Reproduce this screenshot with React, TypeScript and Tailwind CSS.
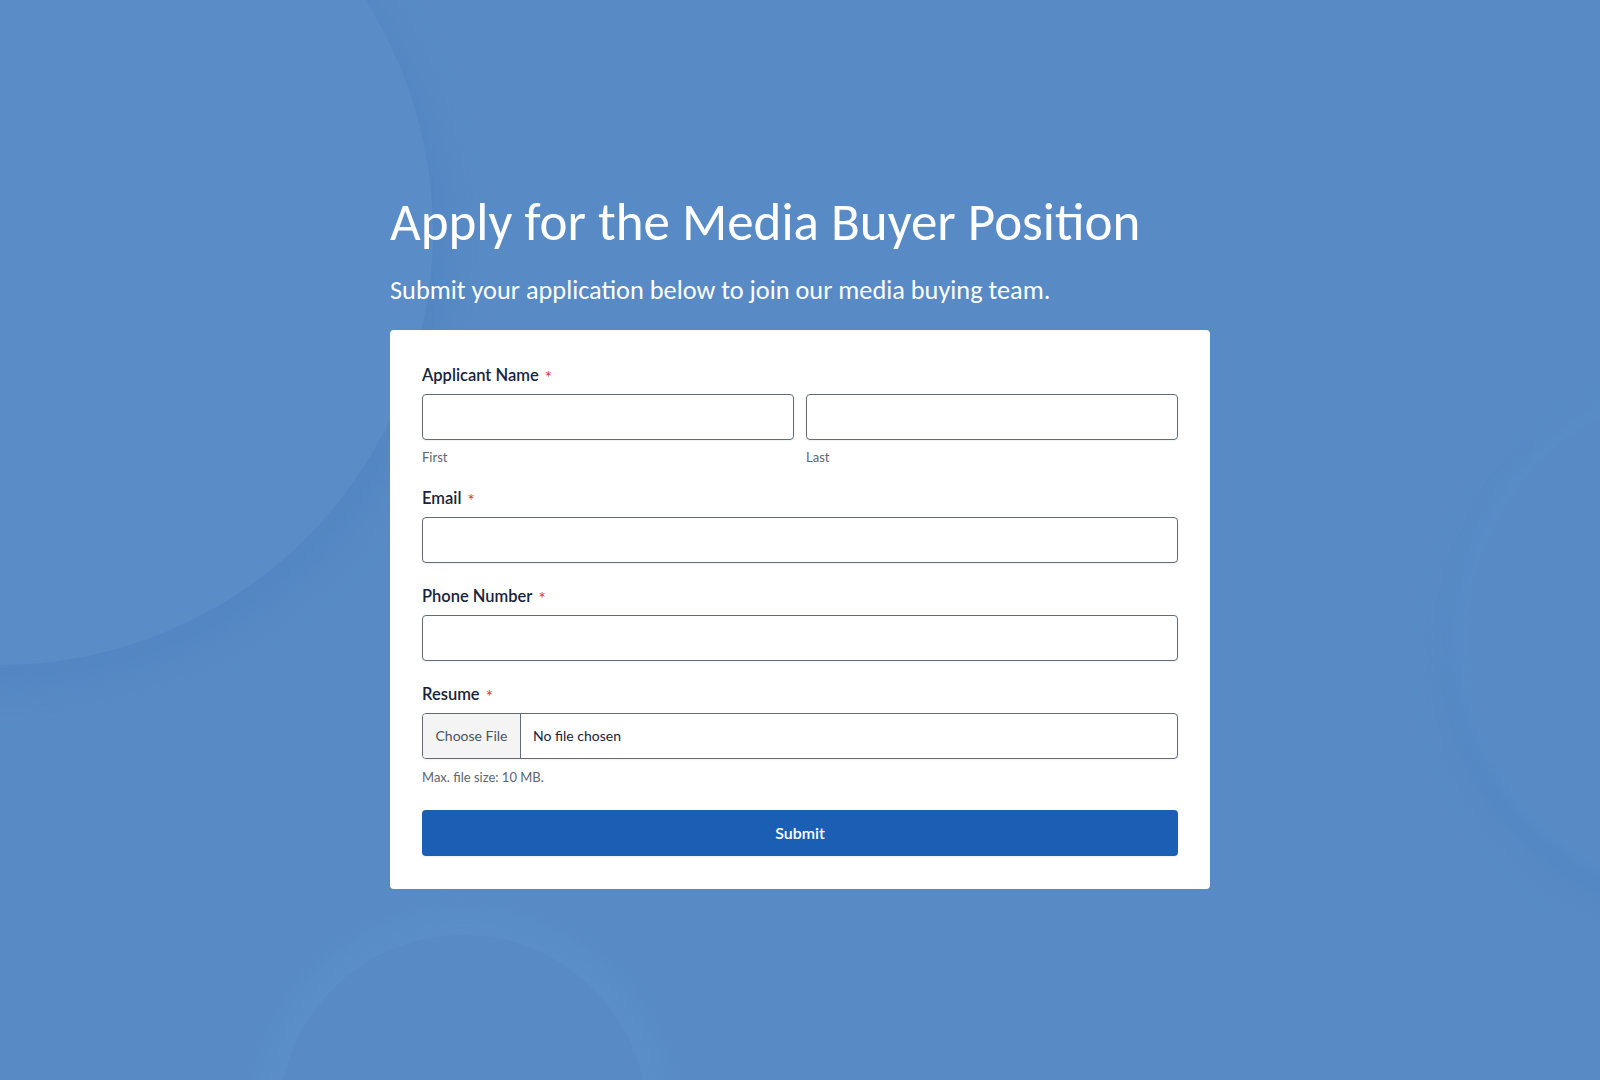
import React from "react"

const labelFont = { fontFamily: "Lato, 'Noto Sans', sans-serif" }
const headFont = { fontFamily: "Carlito, Calibri, Lato, sans-serif" }

function Label({ children }: { children: React.ReactNode }) {
  return (
    <div className="mb-[7px] flex h-[25px] items-center pt-[2px] text-[16.5px] font-semibold text-[#17243a]">
      {children}
      <span className="ml-[6px] translate-y-[3px] text-[17px] font-normal text-[#d33b30]">*</span>
    </div>
  )
}

function TextInput() {
  return (
    <input
      type="text"
      className="block h-[46px] w-full rounded-[4px] border border-[#616b79] bg-white px-3 text-[15px] text-[#17243a] shadow-[0_1px_2px_rgba(0,0,0,0.06)] outline-none"
    />
  )
}

function Backdrop() {
  return (
    <svg className="pointer-events-none absolute inset-0 h-full w-full" viewBox="0 0 1600 1080" preserveAspectRatio="none">
      <defs>
        <filter id="soft" x="-20%" y="-20%" width="140%" height="140%">
          <feGaussianBlur stdDeviation="18" />
        </filter>
        <filter id="softer" x="-20%" y="-20%" width="140%" height="140%">
          <feGaussianBlur stdDeviation="8" />
        </filter>
      </defs>
      {/* top-left disc */}
      <circle cx="14" cy="252" r="436" fill="#4a7dba" opacity="0.35" filter="url(#soft)" />
      <circle cx="0" cy="232" r="433" fill="#5a8cc7" />
      {/* right disc */}
      <circle cx="1712" cy="660" r="262" fill="#4a7dba" opacity="0.35" filter="url(#soft)" />
      <circle cx="1718" cy="640" r="262" fill="#5c90cb" opacity="0.6" filter="url(#softer)" />
      <circle cx="1722" cy="640" r="255" fill="#588bc6" />
      {/* bottom disc */}
      <circle cx="463" cy="1119" r="208" fill="#5c90cb" opacity="0.6" filter="url(#softer)" />
      <circle cx="463" cy="1119" r="184" fill="#588bc6" />
    </svg>
  )
}

export default function App() {
  return (
    <div className="relative flex min-h-screen w-full items-center justify-center overflow-hidden bg-[#588bc6]" style={labelFont}>
      <Backdrop />
      <div className="relative w-[820px] pt-[2px]">
        <h1 className="text-[53px] font-normal leading-[56px] text-white" style={headFont}>
          Apply for the Media Buyer Position
        </h1>
        <p className="mt-[24px] text-[26.3px] leading-[32px] text-white" style={headFont}>
          Submit your application below to join our media buying team.
        </p>

        <form className="mt-[24px] rounded-[4px] bg-white px-8 pb-[33px] pt-8" onSubmit={(e) => e.preventDefault()}>
          <Label>Applicant Name</Label>
          <div className="grid grid-cols-2 gap-3">
            <div>
              <TextInput />
              <div className="mt-2 text-[13px] leading-[18px] text-[#5d6570]">First</div>
            </div>
            <div>
              <TextInput />
              <div className="mt-2 text-[13px] leading-[18px] text-[#5d6570]">Last</div>
            </div>
          </div>

          <div className="mt-[19px]">
            <Label>Email</Label>
            <TextInput />
          </div>

          <div className="mt-[20px]">
            <Label>Phone Number</Label>
            <TextInput />
          </div>

          <div className="mt-[20px]">
            <Label>Resume</Label>
            <div className="flex h-[46px] w-full overflow-hidden rounded-[4px] border border-[#616b79] bg-white shadow-[0_1px_2px_rgba(0,0,0,0.06)]">
              <div className="flex w-[98px] items-center justify-center border-r border-[#616b79] bg-[#f4f4f4] text-[14px] text-[#4b5563]">
                Choose File
              </div>
              <div className="flex items-center pl-3 text-[14px] text-[#17243a]">No file chosen</div>
            </div>
            <div className="mt-[9px] text-[13px] leading-[18px] text-[#5d6570]">Max. file size: 10 MB.</div>
          </div>

          <button
            type="submit"
            className="mt-[24px] flex h-[46px] w-full items-center justify-center rounded-[4px] bg-[#1a5fb4] text-[16px] font-semibold text-white shadow-[0_1px_2px_rgba(0,0,0,0.08)]"
          >
            Submit
          </button>
        </form>
      </div>
    </div>
  )
}
